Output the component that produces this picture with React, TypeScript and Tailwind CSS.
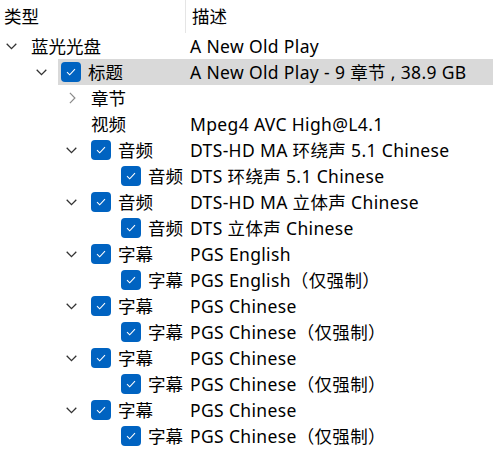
import React from "react";

type Row = {
  level: 0 | 1 | 2 | 3;
  label: string;
  desc: string;
  chevron?: "down" | "right";
  checkbox?: boolean;
  selected?: boolean;
};

const rows: Row[] = [
  { level: 0, label: "蓝光光盘", desc: "A New Old Play", chevron: "down" },
  { level: 1, label: "标题", desc: "A New Old Play - 9 章节 , 38.9 GB", chevron: "down", checkbox: true, selected: true },
  { level: 2, label: "章节", desc: "", chevron: "right" },
  { level: 2, label: "视频", desc: "Mpeg4 AVC High@L4.1" },
  { level: 2, label: "音频", desc: "DTS-HD MA 环绕声 5.1 Chinese", chevron: "down", checkbox: true },
  { level: 3, label: "音频", desc: "DTS 环绕声 5.1 Chinese", checkbox: true },
  { level: 2, label: "音频", desc: "DTS-HD MA 立体声 Chinese", chevron: "down", checkbox: true },
  { level: 3, label: "音频", desc: "DTS 立体声 Chinese", checkbox: true },
  { level: 2, label: "字幕", desc: "PGS English", chevron: "down", checkbox: true },
  { level: 3, label: "字幕", desc: "PGS English（仅强制）", checkbox: true },
  { level: 2, label: "字幕", desc: "PGS Chinese", chevron: "down", checkbox: true },
  { level: 3, label: "字幕", desc: "PGS Chinese（仅强制）", checkbox: true },
  { level: 2, label: "字幕", desc: "PGS Chinese", chevron: "down", checkbox: true },
  { level: 3, label: "字幕", desc: "PGS Chinese（仅强制）", checkbox: true },
  { level: 2, label: "字幕", desc: "PGS Chinese", chevron: "down", checkbox: true },
  { level: 3, label: "字幕", desc: "PGS Chinese（仅强制）", checkbox: true },
];

const spacerCls = ["w-[28px] pl-[6px]", "w-[58px] pl-[36px]", "w-[88px] pl-[66px]", "w-[118px] pl-[96px]"];
const labelCls = ["w-[154px]", "w-[124px]", "w-[94px]", "w-[64px]"];

function ChevronDown() {
  return (
    <svg width="11" height="7" viewBox="0 0 11 7" className="block">
      <path d="M0.7 0.8 L5.5 5.6 L10.3 0.8" fill="none" stroke="#333" strokeWidth="1.3" />
    </svg>
  );
}

function ChevronRight() {
  return (
    <svg width="7" height="12" viewBox="0 0 7 12" className="block ml-[3px]">
      <path d="M0.9 0.8 L5.9 6 L0.9 11.2" fill="none" stroke="#8a8a8a" strokeWidth="1.2" />
    </svg>
  );
}

function Checkbox() {
  return (
    <div className="w-[20px] h-[20px] rounded-[4px] bg-[#0063c1] flex items-center justify-center shrink-0">
      <svg width="10" height="8" viewBox="0 0 10 8" className="block">
        <path d="M1 4.2 L3.7 6.8 L9 1.2" fill="none" stroke="#fff" strokeWidth="1.1" />
      </svg>
    </div>
  );
}

export default function App() {
  return (
    <div
      className="w-[493px] h-[452px] bg-white text-black text-[17.5px] overflow-hidden"
      style={{ fontFamily: '"Noto Sans", "Noto Sans CJK SC", sans-serif' }}
    >
      <div className="flex h-[33px] items-center">
        <div className="w-[185px] h-full pl-[4px] flex items-center">类型</div>
        <div className="w-px h-full bg-[#e5e5e5]" />
        <div className="pl-[6px] flex items-center">描述</div>
      </div>
      {rows.map((r, i) => (
        <div key={i} className="flex h-[26px] items-center leading-[26px] whitespace-nowrap">
          <div className={`${spacerCls[r.level]} h-full flex items-center shrink-0`}>
            {r.chevron === "down" && <ChevronDown />}
            {r.chevron === "right" && <ChevronRight />}
          </div>
          <div className={`flex-1 h-full flex items-center pl-[3px] ${r.selected ? "bg-[#d9d9d9]" : ""}`}>
            <div className={`${labelCls[r.level]} flex items-center gap-[7px] shrink-0`}>
              {r.checkbox && <Checkbox />}
              <span>{r.label}</span>
            </div>
            <div className="pl-[5px] tracking-[0.35px]">{r.desc}</div>
          </div>
        </div>
      ))}
    </div>
  );
}
